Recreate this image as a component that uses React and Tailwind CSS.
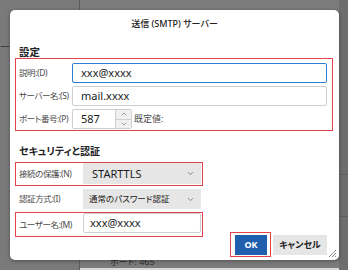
import { ChevronDown, ChevronUp } from "lucide-react";

const FONT = "[font-family:'Noto_Sans','Noto_Sans_CJK_JP',sans-serif] [font-feature-settings:'palt']";

function Label({ children, width }) {
  return (
    <span
      className={`shrink-0 whitespace-nowrap text-[8.5px] leading-[12px] tracking-[-0.4px] text-[#4b4b4b] ${width}`}
    >
      {children}
    </span>
  );
}

function Select({ value, small }) {
  return (
    <div className="flex h-full w-[118px] items-center justify-between bg-[#e6e6e6] pr-[6px]">
      <span
        className={
          small
            ? "pl-[6px] text-[8.5px] leading-[12px] text-[#222]"
            : "pl-[9px] text-[11px] leading-[14px] text-[#1a1a1a]"
        }
      >
        {value}
      </span>
      <ChevronDown className="size-[9px] text-[#555]" strokeWidth={1.6} />
    </div>
  );
}

export default function App() {
  return (
    <div className={`relative flex h-[270px] w-[348px] overflow-hidden bg-[#7c7c7c] ${FONT}`}>
      {/* window behind the dialog */}
      <div className="w-[80px] shrink-0 border-r border-[#5c5c5c] bg-[#7a7a7a] pt-[42px]">
        <span className="block text-[10px] leading-[10px] text-[#333]">ー</span>
      </div>
      <div className="flex flex-1 flex-col justify-end">
        <span className="pb-[2px] pl-[30px] text-[9px] leading-[9px] text-[#2e2e2e]">
          ポート: 465
        </span>
        <div className="h-[2px] bg-[#d9d9d9]" />
      </div>
      <div className="flex w-[9px] shrink-0 flex-col bg-[#6e6e6e]">
        <div className="h-[175px] border-b border-[#5e5e5e]" />
        <div className="h-[42px] border-b border-[#5e5e5e]" />
      </div>

      {/* dialog */}
      <div className="absolute left-[10px] top-[10px] flex h-[250px] w-[329px] flex-col rounded-[5px] bg-white pb-[3px] shadow-[0_1px_4px_rgba(0,0,0,0.35)]">
        <div className="pt-[9px] text-center text-[9px] leading-[10px] font-medium text-[#222]">
          送信 (SMTP) サーバー
        </div>

        <div className="mt-[18px] h-[11px] pl-[9px] text-[10.5px] leading-[11px] font-bold text-[#222]">
          設定
        </div>

        <div className="ml-[5px] mr-[6px] flex h-[73px] flex-col gap-[3px] border border-[#e3434f] pb-[1px] pl-[3px] pr-[5px] pt-[4px]">
          <div className="flex h-[20px] items-center">
            <Label width="w-[53px]">説明:(D)</Label>
            <div className="flex h-full flex-1 items-center rounded-[2px] border border-[#2f7fd0] pl-[8px] text-[11px] text-[#1a1a1a]">
              xxx@xxxx
            </div>
          </div>
          <div className="flex h-[20px] items-center">
            <Label width="w-[53px]">サーバー名:(S)</Label>
            <div className="flex h-full flex-1 items-center rounded-[2px] border border-[#cfcfcf] pl-[8px] text-[11px] text-[#1a1a1a]">
              mail.xxxx
            </div>
          </div>
          <div className="flex h-[20px] items-center">
            <Label width="w-[53px]">ポート番号:(P)</Label>
            <div className="flex h-full w-[60px] items-center justify-between rounded-[2px] border border-[#cfcfcf] pl-[8px] text-[11px] text-[#1a1a1a]">
              <span>587</span>
              <div className="flex h-full w-[16px] flex-col border-l border-[#cfcfcf] bg-[#f0f0f0]">
                <div className="flex flex-1 items-center justify-center border-b border-[#cfcfcf]">
                  <ChevronUp className="size-[8px] text-[#555]" strokeWidth={1.6} />
                </div>
                <div className="flex flex-1 items-center justify-center">
                  <ChevronDown className="size-[8px] text-[#555]" strokeWidth={1.6} />
                </div>
              </div>
            </div>
            <span className="pl-[2px] text-[9px] leading-[12px] text-[#4b4b4b]">既定値:</span>
          </div>
        </div>

        <div className="mb-[5px] mt-[15px] h-[11px] pl-[9px] text-[10px] leading-[11px] font-bold text-[#222]">
          セキュリティと認証
        </div>

        <div className="ml-[5px] mr-[6px] flex items-end justify-between">
          <div className="flex w-[188px] flex-col pb-[20px]">
            <div className="flex h-[24px] items-start border border-[#e3434f] pl-[3px] pr-[1px]">
              <Label width="w-[64px] self-center">接続の保護:(N)</Label>
              <div className="h-[21px]">
                <Select value="STARTTLS" />
              </div>
            </div>
            <div className="flex h-[26px] items-center border border-transparent pl-[3px] pr-[1px]">
              <Label width="w-[64px]">認証方式:(I)</Label>
              <div className="h-[20px]">
                <Select value="通常のパスワード認証" small />
              </div>
            </div>
            <div className="flex h-[25px] items-start border border-[#e3434f] pl-[3px] pr-[1px]">
              <Label width="w-[64px] self-center">ユーザー名:(M)</Label>
              <div className="flex h-[20px] w-[118px] items-center rounded-[2px] border border-[#cfcfcf] pl-[6px] text-[11px] text-[#1a1a1a]">
                xxx@xxxx
              </div>
            </div>
          </div>

          <div className="flex items-center gap-[2px] pr-[6px]">
            <div className="border border-[#e3434f] pb-[1px] pl-[4px] pr-[3px] pt-[2px]">
              <button className="flex h-[20px] w-[32px] items-center justify-center bg-[#1f5fae] text-[9px] font-bold text-white">
                OK
              </button>
            </div>
            <button className="flex h-[20px] w-[54px] items-center justify-center bg-[#e6e6e6] text-[9px] font-bold text-[#222]">
              キャンセル
            </button>
          </div>
        </div>

        {/* resize grip */}
        <svg
          className="absolute bottom-[2px] right-[2px]"
          width="9"
          height="9"
          viewBox="0 0 9 9"
        >
          <path d="M8 1L1 8M8 4L4 8M8 7L7 8" stroke="#8a8a8a" strokeWidth="1" />
        </svg>
      </div>
    </div>
  );
}
